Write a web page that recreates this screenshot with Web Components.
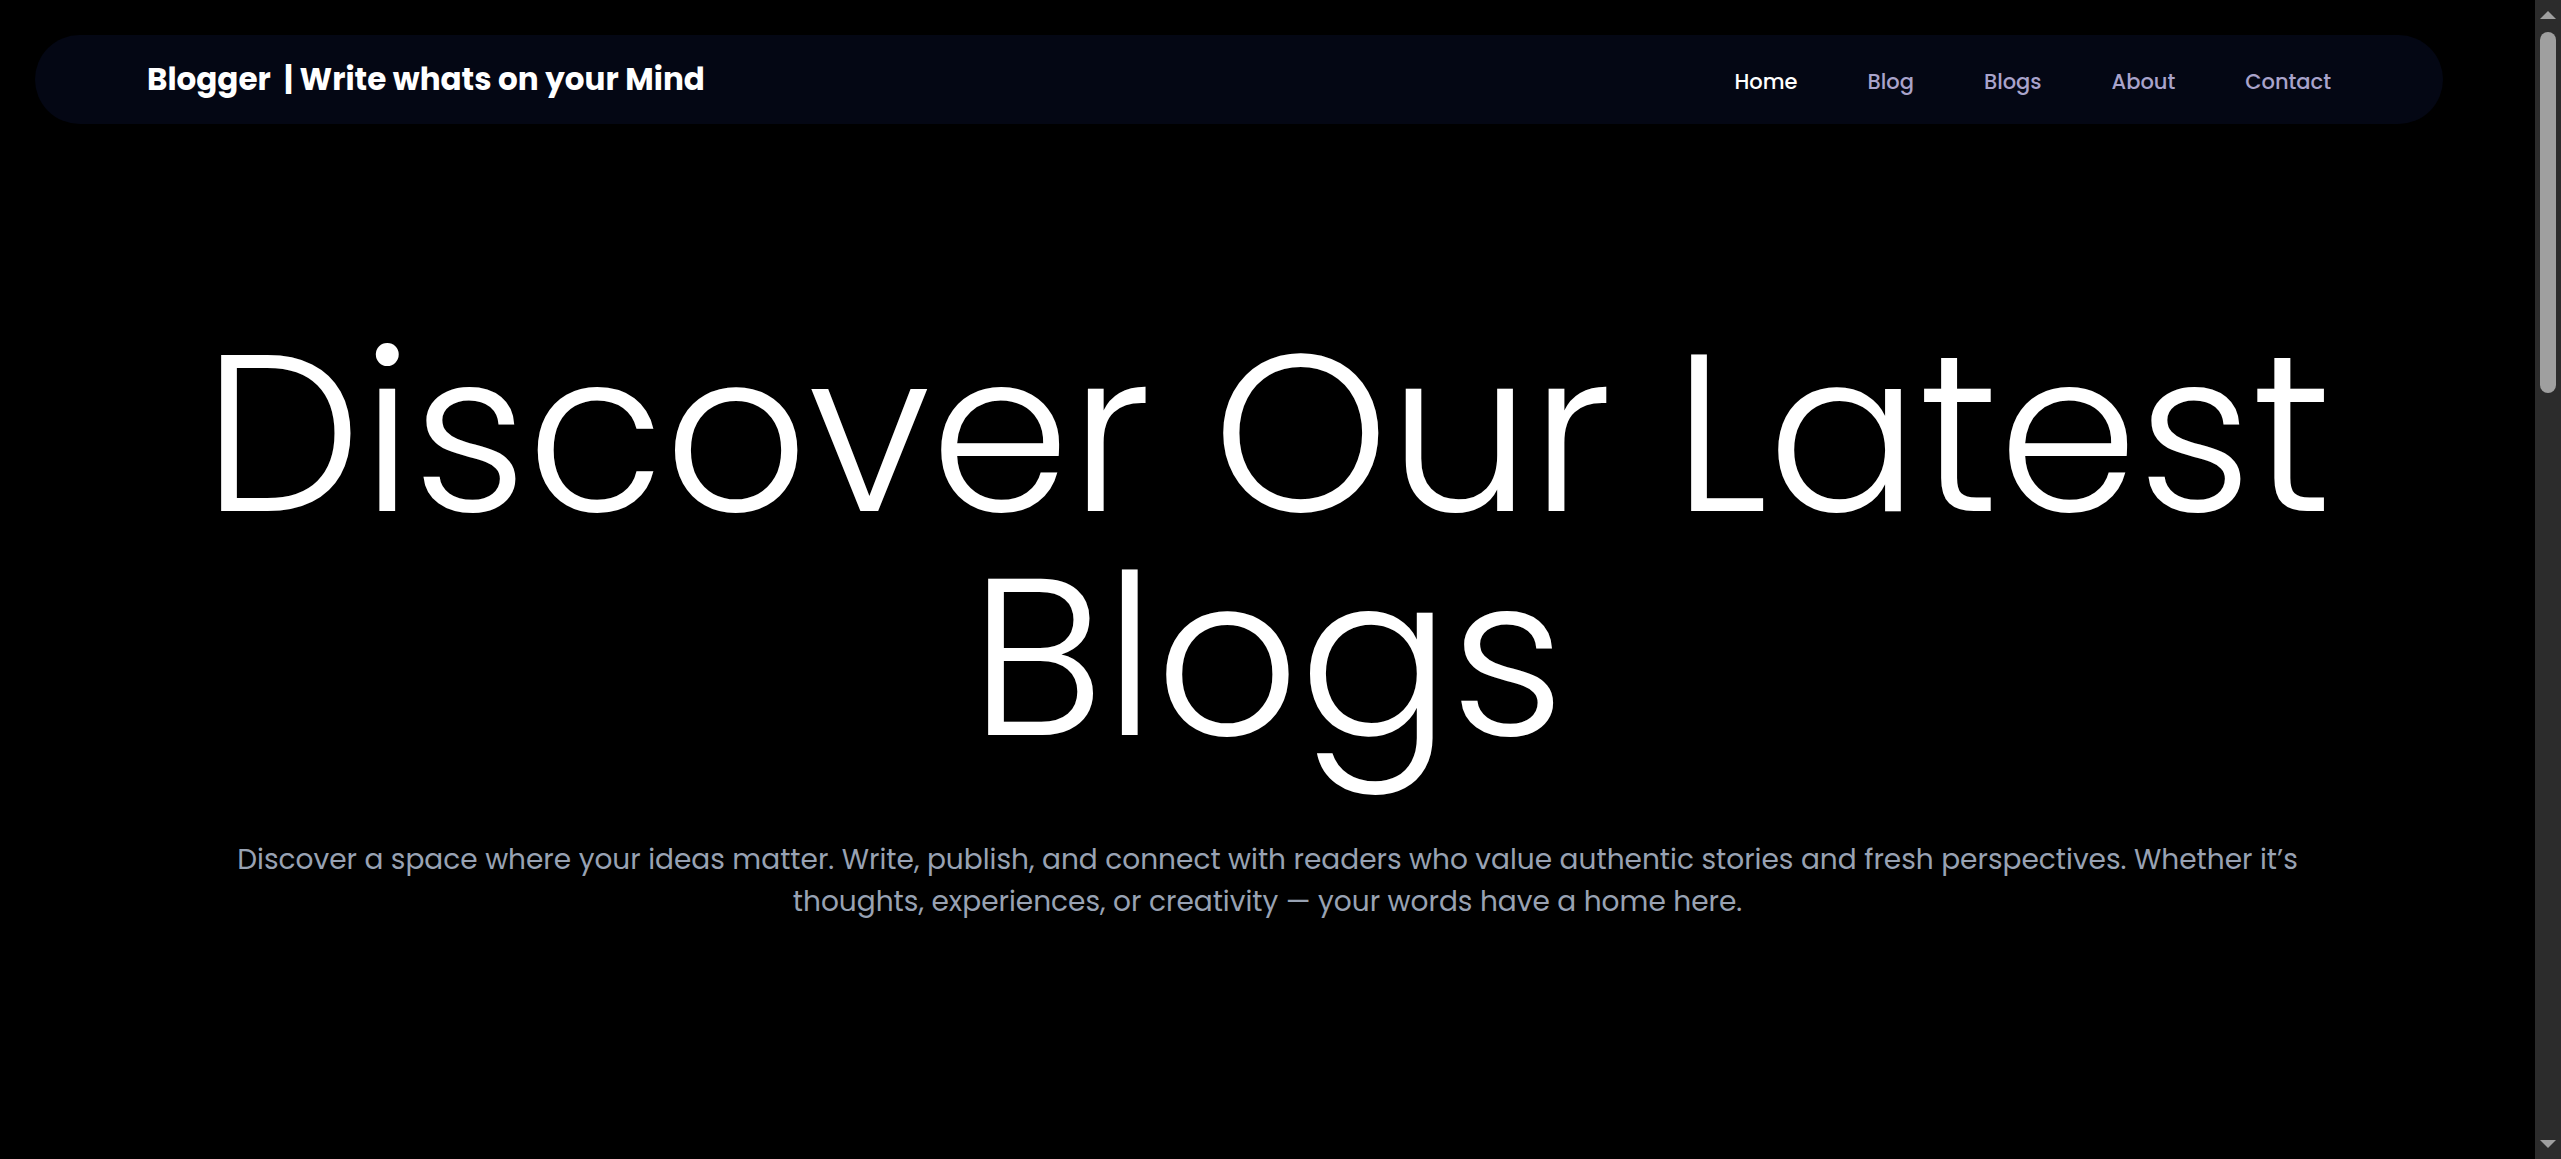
<!DOCTYPE html>
<html lang="en">
<head>
<meta charset="utf-8">
<title>Blogger</title>
<style>
html, body { margin: 0; height: 100%; background: #000; }
body { font-family: Poppins, Inter, "Liberation Sans", sans-serif; font-feature-settings: "cv11"; }
</style>
</head>
<body>
<blog-page>
  <site-header>
    <nav-link href="#home" active>Home</nav-link>
    <nav-link href="#blog">Blog</nav-link>
    <nav-link href="#blogs">Blogs</nav-link>
    <nav-link href="#about">About</nav-link>
    <nav-link href="#contact">Contact</nav-link>
  </site-header>
  <hero-banner>
    <span slot="title">Discover Our Latest Blogs</span>
    Discover a space where your ideas matter. Write, publish, and connect with readers who value authentic stories and fresh perspectives. Whether it’s thoughts, experiences, or creativity — your words have a home here.
  </hero-banner>
</blog-page>
<script>
const define = (name, html) => customElements.define(name, class extends HTMLElement {
  constructor() {
    super();
    this.attachShadow({ mode: 'open' }).innerHTML = html;
  }
});

define('scroll-rail', `
<style>
:host { display: flex; flex-direction: column; align-items: center; width: 26px; box-sizing: border-box; padding: 11px 0; background: #2c2c2c; }
svg { display: block; fill: #9f9f9f; }
.track { flex: 1; align-self: stretch; padding: 13px 5px; }
.thumb { height: 33%; border-radius: 8px; background: #9f9f9f; }
</style>
<svg width="16" height="8" viewBox="0 0 16 8"><path d="M8 0 16 8H0Z"/></svg>
<div class="track"><div class="thumb"></div></div>
<svg width="16" height="8" viewBox="0 0 16 8"><path d="M0 0H16L8 8Z"/></svg>`);

define('blog-page', `
<style>
:host { display: flex; height: 100vh; overflow: hidden; }
main { flex: 1; min-width: 0; }
</style>
<main><slot></slot></main>
<scroll-rail></scroll-rail>`);

define('site-header', `
<style>
:host { display: block; padding: 35px 92px 0 35px; }
header { display: flex; justify-content: space-between; align-items: center; height: 89px; padding: 0 112px; border-radius: 45px; background: #040714; }
.brand { padding-bottom: 2px; color: #fff; font-size: 31px; line-height: 48px; font-weight: 700; white-space: pre; }
nav { display: flex; gap: 70px; }
</style>
<header>
  <div class="brand">Blogger  | Write whats on your Mind</div>
  <nav><slot></slot></nav>
</header>`);

customElements.define('nav-link', class extends HTMLElement {
  connectedCallback() {
    this.attachShadow({ mode: 'open' }).innerHTML = `
<style>
:host { display: block; }
a { display: block; padding-top: 4px; color: #a9a3cb; font-size: 21px; line-height: 32px; font-weight: 500; text-decoration: none; }
:host([active]) a { color: #fff; }
</style>
<a><slot></slot></a>`;
    this.shadowRoot.querySelector('a').href = this.getAttribute('href');
  }
});

define('hero-banner', `
<style>
:host { display: block; padding: 197px 200px 0; text-align: center; }
h1 { margin: 0; color: #fff; font-size: 224px; line-height: 224px; font-weight: 300; }
p { margin: 70px 0 0; color: #98a2b3; font-size: 28px; line-height: 42px; }
</style>
<h1><slot name="title"></slot></h1>
<p><slot></slot></p>`);
</script>
</body>
</html>
